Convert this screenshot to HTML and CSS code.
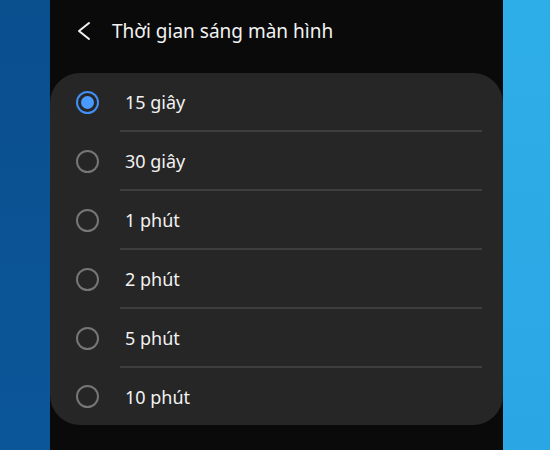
FILE: index.html
```html
<!DOCTYPE html>
<html lang="vi">

<head>
    <meta charset="UTF-8">
    <meta name="viewport" content="width=device-width, initial-scale=1.0">
    <title>Thời gian sáng màn hình</title>
    <link rel="stylesheet" href="styles.css">
</head>

<body>
    <div class="side side-left"></div>

    <div class="screen">
        <!-- Thanh tiêu đề -->
        <div class="header">
            <svg class="back" width="14" height="20" viewBox="0 0 14 20">
                <path d="M12 2 L2 10 L12 18" fill="none" stroke="#f2f2f2" stroke-width="2" stroke-linecap="round" stroke-linejoin="round"/>
            </svg>
            <h1>Thời gian sáng màn hình</h1>
        </div>

        <!-- Danh sách lựa chọn -->
        <div class="card">
            <div class="option">
                <span class="radio checked"></span>
                <span class="label">15 giây</span>
            </div>
            <div class="option">
                <span class="radio"></span>
                <span class="label">30 giây</span>
            </div>
            <div class="option">
                <span class="radio"></span>
                <span class="label">1 phút</span>
            </div>
            <div class="option">
                <span class="radio"></span>
                <span class="label">2 phút</span>
            </div>
            <div class="option">
                <span class="radio"></span>
                <span class="label">5 phút</span>
            </div>
            <div class="option last">
                <span class="radio"></span>
                <span class="label">10 phút</span>
            </div>
        </div>
    </div>

    <div class="side side-right"></div>
</body>

</html>
```

FILE: styles.css
```css
* {
    margin: 0;
    padding: 0;
    box-sizing: border-box;
    font-family: 'Noto Sans', 'DejaVu Sans', sans-serif;
}

body {
    display: flex;
    width: 550px;
    height: 450px;
    overflow: hidden;
    background-color: #0a0a0a;
}

.side {
    height: 100%;
}

.side-left {
    width: 50px;
    background: linear-gradient(180deg, #0a4f8e, #0b5699);
}

.side-right {
    width: 47px;
    background: linear-gradient(180deg, #2eaee8, #2aa6e4);
}

.screen {
    width: 453px;
    height: 100%;
    background-color: #0a0a0a;
    display: flex;
    flex-direction: column;
}

.header {
    height: 73px;
    display: flex;
    align-items: center;
    padding-left: 27px;
    padding-bottom: 11px;
    gap: 21px;
}

.back {
    flex-shrink: 0;
}

h1 {
    font-size: 19px;
    font-weight: normal;
    color: #f2f2f2;
}

.card {
    background-color: #262626;
    border-radius: 30px;
    display: flex;
    flex-direction: column;
}

.option {
    height: 59px;
    display: flex;
    align-items: center;
    padding-left: 26px;
}

.option.last {
    height: 57px;
}

.radio {
    width: 23px;
    height: 23px;
    border-radius: 50%;
    border: 2px solid #767676;
    flex-shrink: 0;
    display: flex;
    justify-content: center;
    align-items: center;
}

.radio.checked {
    border-color: #3f8ff5;
}

.radio.checked::after {
    content: "";
    width: 13px;
    height: 13px;
    border-radius: 50%;
    background-color: #4a9bff;
}

.label {
    flex: 1;
    align-self: stretch;
    display: flex;
    align-items: center;
    margin-left: 21px;
    margin-right: 21px;
    padding-left: 5px;
    padding-top: 1px;
    border-bottom: 2px solid #3d3d3d;
    font-size: 18px;
    color: #f2f2f2;
}

.option.last .label {
    border-bottom: none;
}
```
